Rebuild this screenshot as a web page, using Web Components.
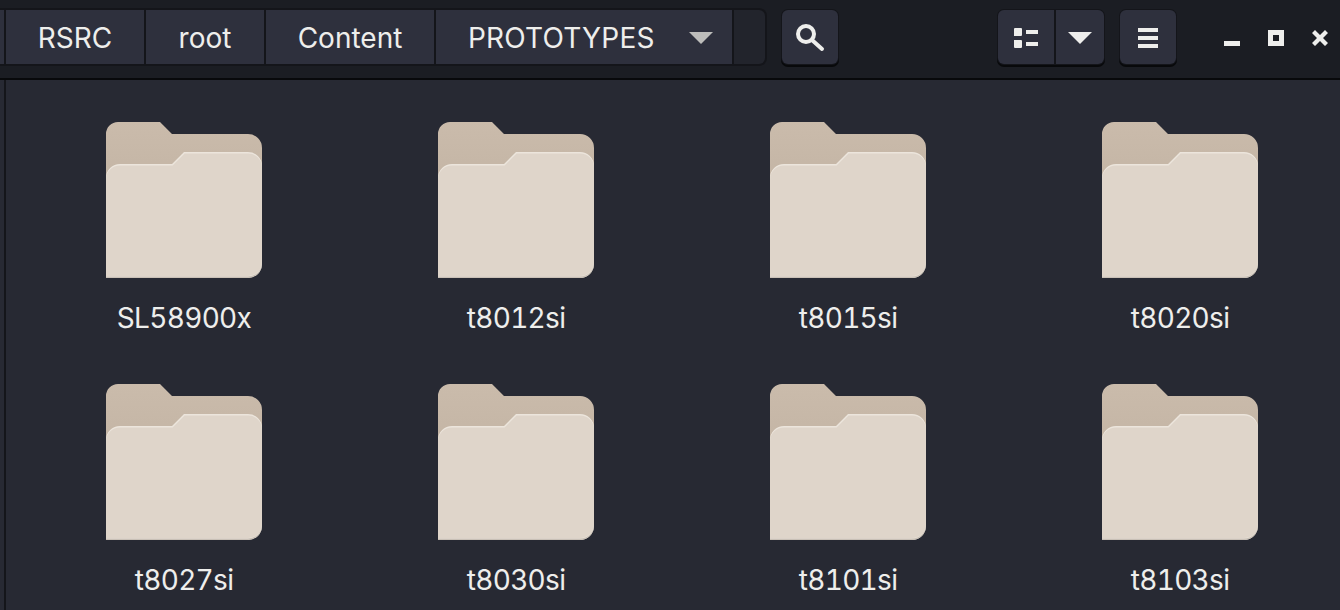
<!DOCTYPE html>
<html>
<head>
<meta charset="utf-8">
<style>
  html, body { margin: 0; height: 100%; overflow: hidden; background: #272933; }
  body { font-family: Inter, "Noto Sans", sans-serif; }
</style>
</head>
<body>
<files-window>
  <header-bar slot="header"></header-bar>
  <folder-item name="SL58900x"></folder-item>
  <folder-item name="t8012si"></folder-item>
  <folder-item name="t8015si"></folder-item>
  <folder-item name="t8020si"></folder-item>
  <folder-item name="t8027si"></folder-item>
  <folder-item name="t8030si"></folder-item>
  <folder-item name="t8101si"></folder-item>
  <folder-item name="t8103si"></folder-item>
</files-window>

<script>
(function () {
  const filesWindow = document.createElement("template");
  filesWindow.innerHTML = `
    <style>
      :host { display: flex; flex-direction: column; width: 1340px; height: 610px; overflow: hidden; background: #272933; }
      .body { flex: 1; display: flex; min-height: 0; }
      .side { width: 6px; border-right: 2px solid #14151a; flex: none; box-sizing: border-box; }
      .grid {
        flex: 1;
        display: grid;
        grid-template-columns: repeat(4, 332px);
        grid-auto-rows: 262px;
        padding: 42px 0 0 12px;
      }
    </style>
    <slot name="header"></slot>
    <div class="body">
      <div class="side"></div>
      <div class="grid"><slot></slot></div>
    </div>
  `;

  class FilesWindow extends HTMLElement {
    constructor() {
      super();
      this.attachShadow({ mode: "open" });
      this.shadowRoot.appendChild(filesWindow.content.cloneNode(true));
    }
  }

  const headerBar = document.createElement("template");
  headerBar.innerHTML = `
    <style>
      :host {
        display: flex;
        align-items: flex-start;
        box-sizing: border-box;
        height: 80px;
        padding-top: 8px;
        background: #1b1d23;
        border-bottom: 2px solid #08090b;
        color: #eeeeec;
        font-size: 28px;
      }
      .path {
        display: flex;
        flex: none;
        width: 767px;
        height: 58px;
        box-sizing: border-box;
        background: #22242c;
        border: 2px solid #14151a;
        border-left: 0;
        border-radius: 0 8px 8px 0;
        overflow: hidden;
      }
      .crumb {
        display: flex;
        flex: none;
        align-items: center;
        justify-content: center;
        box-sizing: border-box;
        height: 54px;
        padding-top: 2px;
        background: #2e303d;
        border-left: 2px solid #14151a;
      }
      .crumb.last { justify-content: flex-start; padding-left: 32px; border-right: 2px solid #14151a; letter-spacing: 0.2px; }
      .stub { width: 4px; background: #2e303d; flex: none; }
      .tri { width: 24px; height: 12px; margin: 0 0 0 34px; }
      .btn {
        display: flex;
        flex: none;
        align-items: center;
        justify-content: center;
        box-sizing: border-box;
        height: 54px;
        margin-top: 2px;
        background: #2e303d;
        border-radius: 6px;
        box-shadow: 0 0 0 1px #14151a, 0 2px 0 1px #08090b;
      }
      .btn.low { padding-top: 2px; }
      .group { display: flex; flex: none; margin-top: 2px; height: 54px; border-radius: 6px; box-shadow: 0 0 0 1px #14151a, 0 2px 0 1px #08090b; overflow: hidden; }
      .group .btn { margin: 0; border-radius: 0; box-shadow: none; }
      .group .btn + .btn { border-left: 2px solid #14151a; }
      .win { display: flex; flex: none; align-items: center; justify-content: center; width: 44px; height: 44px; margin-top: 8px; }
      svg { display: block; fill: #eeeeec; }
    </style>
    <div class="path">
      <div class="stub"></div>
      <div class="crumb" style="width:140px">RSRC</div>
      <div class="crumb" style="width:120px">root</div>
      <div class="crumb" style="width:170px">Content</div>
      <div class="crumb last" style="width:300px">PROTOTYPES
        <svg class="tri" viewBox="0 0 24 12" style="fill:#bdbdbb"><path d="M0 0h24L12 12z"/></svg>
      </div>
    </div>
    <div class="btn" style="width:56px;margin-left:15px">
      <svg width="30" height="30" viewBox="0 0 30 30"><path fill="none" stroke="#eeeeec" stroke-width="4" stroke-linecap="round" d="M11 4a8 8 0 1 0 0 16a8 8 0 1 0 0-16zM17 18l10 9"/></svg>
    </div>
    <div class="group" style="margin-left:160px">
      <div class="btn low" style="width:56px">
        <svg width="24" height="20" viewBox="0 0 24 20"><path d="M1 0h6a1 1 0 0 1 1 1v6a1 1 0 0 1-1 1H0V1a1 1 0 0 1 1-1zM0 12h7a1 1 0 0 1 1 1v6a1 1 0 0 1-1 1H1a1 1 0 0 1-1-1zM12 2h12v4H12zM12 14h12v4H12z"/></svg>
      </div>
      <div class="btn low" style="width:50px">
        <svg width="24" height="12" viewBox="0 0 24 12"><path d="M0 0h24L12 12z"/></svg>
      </div>
    </div>
    <div class="btn low" style="width:56px;margin-left:16px">
      <svg width="20" height="20" viewBox="0 0 20 20"><path d="M0 0h20v4H0zM0 8h20v4H0zM0 16h20v4H0z"/></svg>
    </div>
    <div class="win" style="margin-left:34px"><svg width="16" height="5" viewBox="0 0 16 5" style="margin-top:11px"><path d="M0 0h16v5H0z"/></svg></div>
    <div class="win"><svg width="16" height="16" viewBox="0 0 16 16"><path fill-rule="evenodd" d="M0 0h16v16H0zM5 5v6h6V5z"/></svg></div>
    <div class="win"><svg width="16" height="16" viewBox="0 0 16 16"><path d="M0 3l3-3 5 5 5-5 3 3-5 5 5 5-3 3-5-5-5 5-3-3 5-5z"/></svg></div>
  `;

  class HeaderBar extends HTMLElement {
    constructor() {
      super();
      this.attachShadow({ mode: "open" });
      this.shadowRoot.appendChild(headerBar.content.cloneNode(true));
    }
  }

  const folderItem = document.createElement("template");
  folderItem.innerHTML = `
    <style>
      :host {
        display: flex;
        flex-direction: column;
        align-items: center;
        color: #eeeeec;
        font-size: 28px;
        font-feature-settings: "tnum";
        letter-spacing: -0.7px;
      }
      svg { display: block; width: 156px; height: 156px; }
      .name { margin-top: 22px; line-height: 36px; }
    </style>
    <svg viewBox="0 0 156 156">
      <defs>
        <linearGradient id="back" x1="0" y1="0" x2="0" y2="1">
          <stop offset="0" stop-color="#cabbab"/>
          <stop offset="1" stop-color="#c4b5a5"/>
        </linearGradient>
      </defs>
      <path fill="url(#back)" d="M12 0H54L66 12H142A14 14 0 0 1 156 26V60H0V12A12 12 0 0 1 12 0Z"/>
      <path fill="#ece5dc" d="M14 42H66L78 30H142A14 14 0 0 1 156 44V142A14 14 0 0 1 142 156H0V56A14 14 0 0 1 14 42Z"/>
      <path fill="#dfd5ca" d="M14 43.5H66.6L78.6 31.5H142A14 14 0 0 1 156 45.5V140A14 14 0 0 1 142 154H0V57.5A14 14 0 0 1 14 43.5Z"/>
      <path fill="#c9c0b6" d="M0 154.5H142A14 14 0 0 0 156 140.5V142A14 14 0 0 1 142 156H0Z"/>
    </svg>
    <div class="name"></div>
  `;

  class FolderItem extends HTMLElement {
    constructor() {
      super();
      this.attachShadow({ mode: "open" });
      this.shadowRoot.appendChild(folderItem.content.cloneNode(true));
      this.nameElement = this.shadowRoot.querySelector(".name");
    }

    connectedCallback() {
      this.nameElement.textContent = this.getAttribute("name");
    }
  }

  customElements.define("files-window", FilesWindow);
  customElements.define("header-bar", HeaderBar);
  customElements.define("folder-item", FolderItem);
})();
</script>
</body>
</html>
